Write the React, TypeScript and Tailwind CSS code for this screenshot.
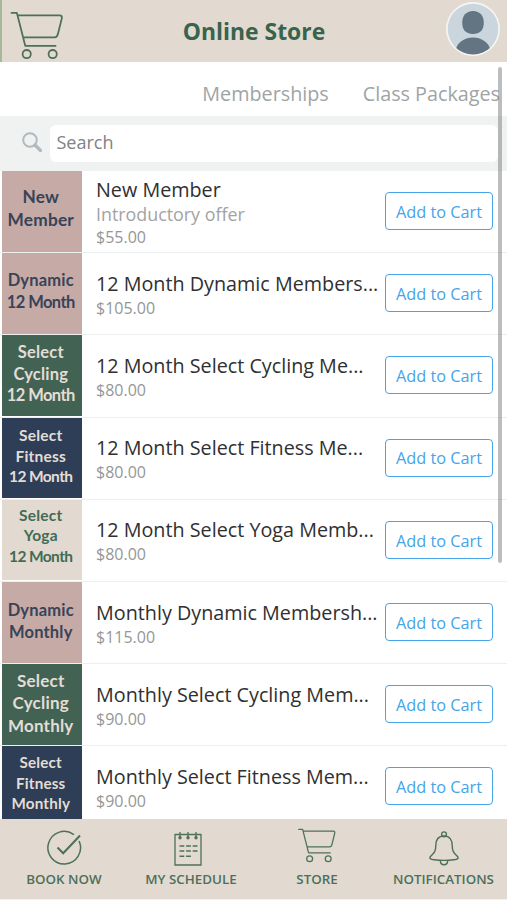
import React, { useState } from 'react';

interface Product {
  title: string;
  note?: string;
  price: string;
  tile: string[];
  tileClass: string;
}

const products: Product[] = [
  { title: 'New Member', note: 'Introductory offer', price: '$55.00', tile: ['New', 'Member'], tileClass: 'bg-[#c6aaa6] text-[#384358] text-[17.3px] leading-[23px] pb-[6px]' },
  { title: '12 Month Dynamic Members...', price: '$105.00', tile: ['Dynamic', '12 Month'], tileClass: 'bg-[#c6aaa6] text-[#384358] text-[16.5px] leading-[21.5px] pb-[4px]' },
  { title: '12 Month Select Cycling Me...', price: '$80.00', tile: ['Select', 'Cycling', '12 Month'], tileClass: 'bg-[#426353] text-[#e3ddd5] text-[16.5px] leading-[21.5px] pb-[2px]' },
  { title: '12 Month Select Fitness Me...', price: '$80.00', tile: ['Select', 'Fitness', '12 Month'], tileClass: 'bg-[#2e3e56] text-[#e3ddd5] text-[15.5px] leading-[20.3px] pb-[4px]' },
  { title: '12 Month Select Yoga Memb...', price: '$80.00', tile: ['Select', 'Yoga', '12 Month'], tileClass: 'bg-[#e2dad1] text-[#426b55] text-[15.5px] leading-[20.3px] pb-[9px]' },
  { title: 'Monthly Dynamic Membersh...', price: '$115.00', tile: ['Dynamic', 'Monthly'], tileClass: 'bg-[#c6aaa6] text-[#384358] text-[16.5px] leading-[21.5px] pb-[1px]' },
  { title: 'Monthly Select Cycling Mem...', price: '$90.00', tile: ['Select', 'Cycling', 'Monthly'], tileClass: 'bg-[#426353] text-[#e3ddd5] text-[17px] leading-[22.5px] pb-[2px]' },
  { title: 'Monthly Select Fitness Mem...', price: '$90.00', tile: ['Select', 'Fitness', 'Monthly'], tileClass: 'bg-[#2e3e56] text-[#e3ddd5] text-[15.2px] leading-[20.3px] pb-[8px]' },
];

const CartIcon = ({ className, strokeWidth }: { className: string; strokeWidth: number }) => (
  <svg viewBox="0 0 54 50" className={className} fill="none" stroke="currentColor" strokeWidth={strokeWidth} strokeLinecap="round" strokeLinejoin="round">
    <path d="M1 2h5.500L15 35.500h31M7.500 4.500H50q3 0 2.300 3L48.500 23q-1 4-3.500 4H13" />
    <circle cx="16.500" cy="44" r="4.200" />
    <circle cx="43" cy="44" r="4.200" />
  </svg>
);

const BookIcon = () => (
  <svg viewBox="0 0 36 36" className="h-9 w-9" fill="none" stroke="currentColor" strokeWidth="1.500" strokeLinecap="round">
    <path d="M27.500 4.300A16.300 16.300 0 1 0 33.300 11.500" />
    <path d="M11.500 17.500l5.700 5.800L34 5.500" strokeWidth="2" strokeLinecap="butt" />
  </svg>
);

const ScheduleIcon = () => (
  <svg viewBox="0 0 28 34" className="mr-[7px] h-[34px] w-7" fill="none" stroke="currentColor" strokeWidth="1.300">
    <path d="M1 2.500h26v30.500H1z" />
    <path d="M6 0v5M14 0v5M22 0v5" />
    <path d="M5.500 14h18M5.500 19h18M5.500 24.300h11.500" strokeWidth="1.500" strokeDasharray="4.800 1.800" />
    <g fill="currentColor" stroke="none">
      <circle cx="6" cy="5.800" r="1.700" />
      <circle cx="14" cy="5.800" r="1.700" />
      <circle cx="22" cy="5.800" r="1.700" />
    </g>
  </svg>
);

const BellIcon = () => (
  <svg viewBox="0 0 30 35" className="h-[35px] w-[30px]" fill="none" stroke="currentColor" strokeWidth="1.400" strokeLinejoin="round">
    <circle cx="15" cy="3.300" r="2.400" />
    <path d="M15 5C9 5 6.800 9.500 6.800 14.500C6.800 20 5.500 21.500 1.500 25.500Q-.5 28.500 5 28.800Q15 30 25 28.800Q30.500 28.500 28.500 25.500C24.500 21.500 23.200 20 23.200 14.500C23.200 9.500 21 5 15 5Z" />
    <path d="M11.300 29.300c0 6 7.400 6 7.400 0" />
  </svg>
);

const Avatar = () => (
  <svg viewBox="0 0 54 54" className="mb-[3px] h-[54px] w-[54px]">
    <defs>
      <clipPath id="avatar">
        <circle cx="27" cy="27" r="25.500" />
      </clipPath>
    </defs>
    <circle cx="27" cy="27" r="27" fill="#f5f5f4" />
    <circle cx="27" cy="27" r="25.300" fill="#cbd5dd" />
    <g clipPath="url(#avatar)" fill="#637583">
      <path d="M27 9c7 0 10.800 5 10.800 11.500S35 32 27 32s-10.800-5-10.800-11.500S20 9 27 9Z" />
      <ellipse cx="27" cy="50" rx="17.500" ry="14.500" />
    </g>
  </svg>
);

const SearchIcon = () => (
  <svg viewBox="0 0 20 20" className="mb-[3px] h-5 w-5" fill="none" stroke="#b0babf">
    <circle cx="8" cy="8" r="6.800" strokeWidth="2" />
    <path d="M13 13l5.500 5.500" strokeWidth="3.200" strokeLinecap="round" />
  </svg>
);

const ProductRow = ({ product }: { product: Product }) => (
  <li className="flex h-[82.2px] shrink-0 items-stretch border-b border-[#eceff0] pl-[1.500px]">
    <div className={`mb-[0.500px] flex w-[80.500px] shrink-0 flex-col items-center justify-center pr-[2px] font-['Lato',sans-serif] font-bold whitespace-nowrap ${product.tileClass}`}>
      {product.tile.map((line) => (
        <span key={line} className={line === '12 Month' ? 'tracking-[-0.600px]' : 'tracking-[0.200px]'}>{line}</span>
      ))}
    </div>
    <div className="flex min-w-0 flex-1 flex-col justify-center pt-[2px] pl-3.5 whitespace-nowrap">
      <p className="text-[19.750px] leading-[26px] text-[#303030]">{product.title}</p>
      {product.note && <p className="-mt-px text-[17.850px] leading-[24px] text-[#a3a3a3]">{product.note}</p>}
      <p className="text-[16px] leading-[22px] text-[#969696]">{product.price}</p>
    </div>
    <button className="mr-[14px] mb-px h-[38px] w-[108px] shrink-0 self-center rounded-[4px] border-[1.500px] border-[#46a4e8] pt-[2px] text-[16.300px] text-[#46a4e8]">
      Add to Cart
    </button>
  </li>
);

const navItems = [
  { label: 'BOOK NOW', icon: <BookIcon />, width: 'w-[128px]' },
  { label: 'MY SCHEDULE', icon: <ScheduleIcon />, width: 'w-[126px]' },
  { label: 'STORE', icon: <CartIcon className="mb-[3px] h-[35px] w-[38px]" strokeWidth={1.8} />, width: 'w-[126px]' },
  { label: 'NOTIFICATIONS', icon: <BellIcon />, width: 'w-[127px]' },
];

const App = () => {
  const [query, setQuery] = useState('');

  return (
    <div className="relative flex h-[900px] w-[507px] flex-col overflow-hidden bg-white font-['Open_Sans',sans-serif]">
      <header className="flex h-[61.500px] shrink-0 items-center justify-between border-l-2 border-[#a5b998] bg-[#e2dad1] pr-[7px] pl-[8px] text-[#4d705a]">
        <CartIcon className="mt-[10px] h-[49px] w-[54px]" strokeWidth={1.8} />
        <h1 className="pt-[3px] pr-[2px] text-[22.900px] font-bold text-[#38634d]">Online Store</h1>
        <Avatar />
      </header>

      <nav className="flex h-[54px] shrink-0 items-center justify-end gap-[34px] pt-[10px] pr-[7px] text-[19.750px] text-[#a0a4a5]">
        <span>Memberships</span>
        <span>Class Packages</span>
      </nav>

      <div className="flex h-[55px] shrink-0 items-center bg-[#f0f1f1] pr-[9px] pl-[22px]">
        <SearchIcon />
        <input
          value={query}
          onChange={(e) => setQuery(e.target.value)}
          placeholder="Search"
          className="ml-[8px] h-[37px] min-w-0 flex-1 rounded-md bg-white px-[6.500px] pb-[2px] text-[18px] placeholder:text-[#828282]"
        />
      </div>

      <ul className="flex min-h-0 flex-1 flex-col overflow-hidden pt-[0.500px]">
        {products.map((product) => (
          <ProductRow key={product.title} product={product} />
        ))}
      </ul>

      <footer className="flex h-[81px] shrink-0 border-b border-[#f5f2ee] bg-[#e2dad1] text-[#4d705a]">
        {navItems.map((item) => (
          <div key={item.label} className={`flex shrink-0 flex-col items-center ${item.width}`}>
            <div className="flex h-[49px] items-end pb-[2px]">{item.icon}</div>
            <span className="text-[13.350px] leading-[22px] font-semibold">{item.label}</span>
          </div>
        ))}
      </footer>

      {/* scroll thumb over the list */}
      <div className="absolute top-[67px] right-[5.500px] h-[496px] w-[4px] rounded-full bg-[#777b7d]/50" />
    </div>
  );
};

export default App;
